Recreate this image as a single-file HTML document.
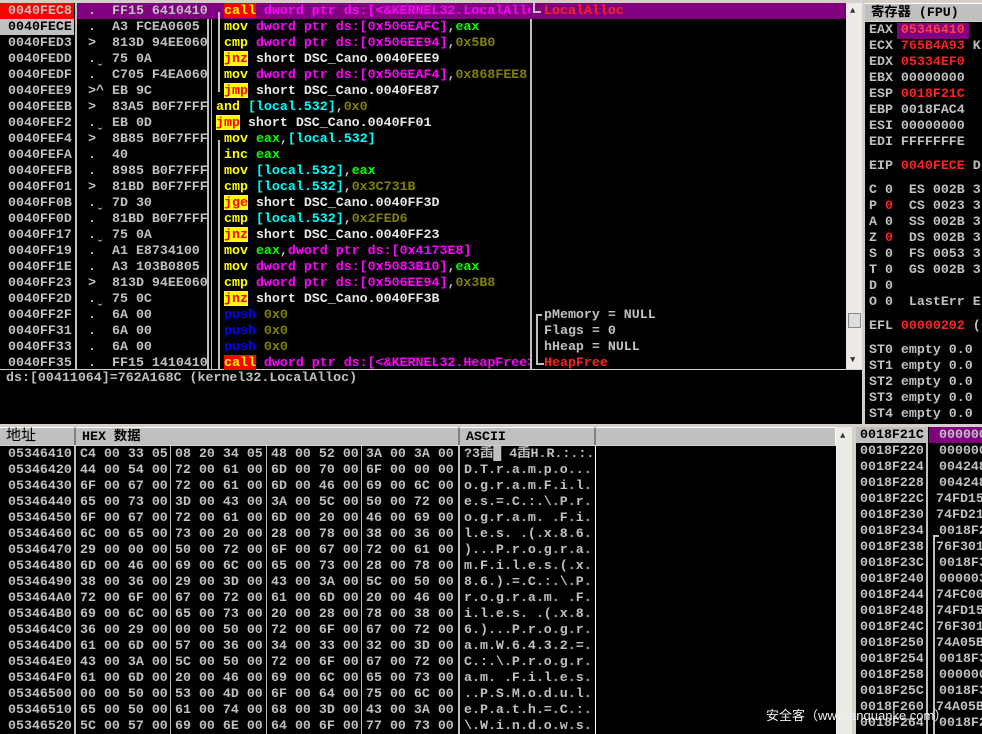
<!DOCTYPE html>
<html><head><meta charset="utf-8">
<style>
*{margin:0;padding:0;box-sizing:border-box}
body{width:982px;height:734px;overflow:hidden;background:#d4d0c8;position:relative;font-family:"Liberation Mono","Noto Sans CJK SC",monospace;font-size:13.3px;font-weight:bold;color:#c0c0c0}
.a{position:absolute;white-space:pre;line-height:16px;height:16px;overflow:hidden}
.blk{position:absolute;background:#000}
.vl{position:absolute;background:#c0c0c0;width:2px}
.y{color:#ffff00}.m{color:#ff00ff}.g{color:#00ff00}.c{color:#00ffff}.o{color:#808000}.b{color:#0000ff}.w{color:#e8e8e8}.r{color:#ff2020}
.cl{background:#ff0000;color:#ffff00}.jp{background:#ffff00;color:#ff0000}
.hd{position:absolute;background:#c0c0c0;color:#000;line-height:18px;height:18px;border-right:2px solid #808080;border-top:1px solid #fff;padding-left:6px;white-space:pre;font-weight:bold}
</style></head><body>
<!-- disasm pane -->
<div class="blk" style="left:0;top:3px;width:846px;height:366px"></div>
<div class="blk" style="left:0;top:3px;width:74px;height:366px"></div>
<div class="vl" style="left:75px;top:3px;height:366px"></div>
<div class="vl" style="left:207px;top:3px;height:366px"></div>
<div class="vl" style="left:211px;top:3px;height:366px;width:1px"></div>
<div class="vl" style="left:530px;top:3px;height:366px"></div>
<div style="position:absolute;left:77px;top:3px;width:769px;height:16px;background:#800080"></div>
<div style="position:absolute;left:0;top:3px;width:74px;height:16px;background:#ff0000"></div>
<div style="position:absolute;left:0;top:19px;width:74px;height:16px;background:#c0c0c0"></div>
<!-- scrollbar -->
<div style="position:absolute;left:846px;top:3px;width:16px;height:366px;background:#ecebe7"></div>
<div style="position:absolute;left:848px;top:313px;width:13px;height:15px;background:#ddd;border:1px solid #888"></div>
<div class="a" style="left:850px;top:3px;font-size:9px;color:#333">▲</div>
<div class="a" style="left:850px;top:352px;font-size:9px;color:#333">▼</div>
<div id="dis"></div>
<!-- info -->
<div class="blk" style="left:0;top:370px;width:862px;height:54px"></div>
<div class="a" style="left:6px;top:370px">ds:[00411064]=762A168C (kernel32.LocalAlloc)</div>
<!-- registers -->
<div class="blk" style="left:865px;top:22px;width:117px;height:402px"></div>
<div class="hd" style="left:865px;top:3px;width:117px;font-family:'Liberation Mono','Noto Sans CJK SC',monospace;border-right:none">寄存器 (FPU)</div>
<div style="position:absolute;left:897px;top:23px;width:72px;height:16px;background:#800080"></div>
<div id="reg"></div>
<!-- dump -->
<div class="blk" style="left:0;top:446px;width:836px;height:288px"></div>
<div class="hd" style="left:0;top:427px;width:76px;font-weight:normal;font-size:15px">地址</div>
<div class="hd" style="left:76px;top:427px;width:384px">HEX 数据</div>
<div class="hd" style="left:460px;top:427px;width:136px">ASCII</div>
<div class="hd" style="left:596px;top:427px;width:240px;border-right:1px solid #fff"></div>
<div class="vl" style="left:74px;top:446px;height:288px"></div>
<div class="vl" style="left:170px;top:446px;height:288px;width:1px"></div>
<div class="vl" style="left:266px;top:446px;height:288px;width:1px"></div>
<div class="vl" style="left:361px;top:446px;height:288px;width:1px"></div>
<div class="vl" style="left:458px;top:446px;height:288px"></div>
<div class="vl" style="left:595px;top:446px;height:288px;background:#fff;width:1px"></div>
<div style="position:absolute;left:836px;top:427px;width:16px;height:307px;background:#ecebe7"></div>
<div class="a" style="left:840px;top:428px;font-size:9px;color:#333">▲</div>
<div id="dump"></div>
<!-- stack -->
<div class="blk" style="left:856px;top:427px;width:126px;height:307px"></div>
<div style="position:absolute;left:856px;top:427px;width:70px;height:16px;background:#c0c0c0"></div>
<div class="vl" style="left:926px;top:427px;height:307px"></div>
<div style="position:absolute;left:929px;top:427px;width:53px;height:16px;background:#800080"></div>
<div style="position:absolute;left:933px;top:535px;width:2px;height:199px;background:#c0c0c0"></div>
<div style="position:absolute;left:933px;top:535px;width:6px;height:2px;background:#c0c0c0"></div>
<div id="stk"></div>
<div class="a" style="left:766px;top:707px;font-family:'Liberation Sans','Noto Sans CJK SC',sans-serif;font-weight:normal;font-size:13px;color:#f0f0f0;height:18px;line-height:18px">安全客（www.anquanke.com）</div>
<script>
var D=[
["0040FEC8",".","FF15 64104100",'<span class="cl">call</span> <span class="m">dword ptr ds:[&lt;&amp;KERNEL32.LocalAlloc&gt;]</span>',224,'<span class="r">LocalAlloc</span>'],
["0040FECE",".","A3 FCEA0605",'<span class="y">mov</span> <span class="m">dword ptr ds:[0x506EAFC]</span>,<span class="g">eax</span>',224],
["0040FED3",">","813D 94EE0605",'<span class="y">cmp</span> <span class="m">dword ptr ds:[0x506EE94]</span>,<span class="o">0x5B0</span>',224],
["0040FEDD",".\u02ec","75 0A",'<span class="jp">jnz</span> <span class="w">short DSC_Cano.0040FEE9</span>',224],
["0040FEDF",".","C705 F4EA0605",'<span class="y">mov</span> <span class="m">dword ptr ds:[0x506EAF4]</span>,<span class="o">0x868FEE8</span>',224],
["0040FEE9",">^","EB 9C",'<span class="jp">jmp</span> <span class="w">short DSC_Cano.0040FE87</span>',224],
["0040FEEB",">","83A5 B0F7FFFF",'<span class="y">and</span> <span class="c">[local.532]</span>,<span class="o">0x0</span>',216],
["0040FEF2",".\u02ec","EB 0D",'<span class="jp">jmp</span> <span class="w">short DSC_Cano.0040FF01</span>',216],
["0040FEF4",">","8B85 B0F7FFFF",'<span class="y">mov</span> <span class="g">eax</span>,<span class="c">[local.532]</span>',224],
["0040FEFA",".","40",'<span class="y">inc</span> <span class="g">eax</span>',224],
["0040FEFB",".","8985 B0F7FFFF",'<span class="y">mov</span> <span class="c">[local.532]</span>,<span class="g">eax</span>',224],
["0040FF01",">","81BD B0F7FFFF",'<span class="y">cmp</span> <span class="c">[local.532]</span>,<span class="o">0x3C731B</span>',224],
["0040FF0B",".\u02ec","7D 30",'<span class="jp">jge</span> <span class="w">short DSC_Cano.0040FF3D</span>',224],
["0040FF0D",".","81BD B0F7FFFF",'<span class="y">cmp</span> <span class="c">[local.532]</span>,<span class="o">0x2FED6</span>',224],
["0040FF17",".\u02ec","75 0A",'<span class="jp">jnz</span> <span class="w">short DSC_Cano.0040FF23</span>',224],
["0040FF19",".","A1 E8734100",'<span class="y">mov</span> <span class="g">eax</span>,<span class="m">dword ptr ds:[0x4173E8]</span>',224],
["0040FF1E",".","A3 103B0805",'<span class="y">mov</span> <span class="m">dword ptr ds:[0x5083B10]</span>,<span class="g">eax</span>',224],
["0040FF23",">","813D 94EE0605",'<span class="y">cmp</span> <span class="m">dword ptr ds:[0x506EE94]</span>,<span class="o">0x3B8</span>',224],
["0040FF2D",".\u02ec","75 0C",'<span class="jp">jnz</span> <span class="w">short DSC_Cano.0040FF3B</span>',224],
["0040FF2F",".","6A 00",'<span class="b">push</span> <span class="o">0x0</span>',224,'pMemory = NULL'],
["0040FF31",".","6A 00",'<span class="b">push</span> <span class="o">0x0</span>',224,'Flags = 0'],
["0040FF33",".","6A 00",'<span class="b">push</span> <span class="o">0x0</span>',224,'hHeap = NULL'],
["0040FF35",".","FF15 14104100",'<span class="cl">call</span> <span class="m">dword ptr ds:[&lt;&amp;KERNEL32.HeapFree&gt;]</span>',224,'<span class="r">HeapFree</span>']];
var h='';
D.forEach(function(r,i){var y=3+i*16;var ac=i==1?'color:#000':'';
h+='<div class="a" style="left:8px;top:'+y+'px;'+ac+'">'+r[0]+'</div>';
h+='<div class="a" style="left:88px;top:'+y+'px">'+r[1]+'</div>';
h+='<div class="a" style="left:112px;top:'+y+'px;width:95px">'+r[2]+'</div>';
h+='<div class="a" style="left:'+r[4]+'px;top:'+y+'px;width:'+(530-r[4])+'px">'+r[3]+'</div>';
if(r[5])h+='<div class="a" style="left:544px;top:'+y+'px;width:300px">'+r[5]+'</div>';});
// bracket lines
h+='<div style="position:absolute;left:218px;top:12px;width:2px;height:80px;background:#c0c0c0"></div>';
h+='<div style="position:absolute;left:218px;top:140px;width:2px;height:230px;background:#c0c0c0"></div>';
h+='<div style="position:absolute;left:533px;top:3px;width:2px;height:9px;background:#c0c0c0"></div><div style="position:absolute;left:533px;top:11px;width:8px;height:2px;background:#c0c0c0"></div>';
h+='<div style="position:absolute;left:536px;top:314px;width:2px;height:50px;background:#c0c0c0"></div><div style="position:absolute;left:536px;top:314px;width:6px;height:2px;background:#c0c0c0"></div><div style="position:absolute;left:536px;top:363px;width:8px;height:2px;background:#c0c0c0"></div>';
document.getElementById('dis').innerHTML=h;
var R=[[30,'EAX <span style="color:#ff4040">05346410</span>'],[46,'ECX <span class="r">765B4A93</span> K'],[62,'EDX <span class="r">05334EF0</span>'],[78,'EBX 00000000'],[94,'ESP <span class="r">0018F21C</span>'],[110,'EBP 0018FAC4'],[126,'ESI 00000000'],[142,'EDI FFFFFFFE'],[166,'EIP <span class="r">0040FECE</span> D'],
[190,'C 0  ES 002B 3'],[206,'P <span class="r">0</span>  CS 0023 3'],[222,'A 0  SS 002B 3'],[238,'Z <span class="r">0</span>  DS 002B 3'],[254,'S 0  FS 0053 3'],[270,'T 0  GS 002B 3'],[286,'D 0'],[302,'O 0  LastErr E'],[326,'EFL <span class="r">00000202</span> ('],[350,'ST0 empty 0.0'],[366,'ST1 empty 0.0'],[382,'ST2 empty 0.0'],[398,'ST3 empty 0.0'],[414,'ST4 empty 0.0']];
h='';R.forEach(function(r){h+='<div class="a" style="left:869px;top:'+(r[0]-8)+'px;width:113px">'+r[1]+'</div>';});
document.getElementById('reg').innerHTML=h;
var M=["05346410 C4 00 33 05 08 20 34 05 48 00 52 00 3A 00 3A 00 ?3\u81ff\u2588 4\u81ffH.R.:.:.",
"05346420 44 00 54 00 72 00 61 00 6D 00 70 00 6F 00 00 00 D.T.r.a.m.p.o...",
"05346430 6F 00 67 00 72 00 61 00 6D 00 46 00 69 00 6C 00 o.g.r.a.m.F.i.l.",
"05346440 65 00 73 00 3D 00 43 00 3A 00 5C 00 50 00 72 00 e.s.=.C.:.\\.P.r.",
"05346450 6F 00 67 00 72 00 61 00 6D 00 20 00 46 00 69 00 o.g.r.a.m. .F.i.",
"05346460 6C 00 65 00 73 00 20 00 28 00 78 00 38 00 36 00 l.e.s. .(.x.8.6.",
"05346470 29 00 00 00 50 00 72 00 6F 00 67 00 72 00 61 00 )...P.r.o.g.r.a.",
"05346480 6D 00 46 00 69 00 6C 00 65 00 73 00 28 00 78 00 m.F.i.l.e.s.(.x.",
"05346490 38 00 36 00 29 00 3D 00 43 00 3A 00 5C 00 50 00 8.6.).=.C.:.\\.P.",
"053464A0 72 00 6F 00 67 00 72 00 61 00 6D 00 20 00 46 00 r.o.g.r.a.m. .F.",
"053464B0 69 00 6C 00 65 00 73 00 20 00 28 00 78 00 38 00 i.l.e.s. .(.x.8.",
"053464C0 36 00 29 00 00 00 50 00 72 00 6F 00 67 00 72 00 6.)...P.r.o.g.r.",
"053464D0 61 00 6D 00 57 00 36 00 34 00 33 00 32 00 3D 00 a.m.W.6.4.3.2.=.",
"053464E0 43 00 3A 00 5C 00 50 00 72 00 6F 00 67 00 72 00 C.:.\\.P.r.o.g.r.",
"053464F0 61 00 6D 00 20 00 46 00 69 00 6C 00 65 00 73 00 a.m. .F.i.l.e.s.",
"05346500 00 00 50 00 53 00 4D 00 6F 00 64 00 75 00 6C 00 ..P.S.M.o.d.u.l.",
"05346510 65 00 50 00 61 00 74 00 68 00 3D 00 43 00 3A 00 e.P.a.t.h.=.C.:.",
"05346520 5C 00 57 00 69 00 6E 00 64 00 6F 00 77 00 73 00 \\.W.i.n.d.o.w.s."];
h='';M.forEach(function(l,i){var y=446+i*16;var p=l.split(' ');var asc=l.substr(57);
h+='<div class="a" style="left:8px;top:'+y+'px">'+p[0]+'</div>';
for(var g=0;g<4;g++){var x=[80,175,271,366][g];h+='<div class="a" style="left:'+x+'px;top:'+y+'px">'+p.slice(1+g*4,5+g*4).join(' ')+'</div>';}
h+='<div class="a" style="left:464px;top:'+y+'px">'+asc.replace(/&/g,'&amp;').replace(/</g,'&lt;')+'</div>';});
document.getElementById('dump').innerHTML=h;
var S=[["0018F21C","00000000"],["0018F220","00000000"],["0018F224","00424800"],["0018F228","00424800"],["0018F22C","74FD1500"],["0018F230","74FD2100"],["0018F234","0018F200"],["0018F238","76F30100"],["0018F23C","0018F300"],["0018F240","00000300"],["0018F244","74FC0000"],["0018F248","74FD1500"],["0018F24C","76F30100"],["0018F250","74A05B00"],["0018F254","0018F300"],["0018F258","00000000"],["0018F25C","0018F300"],["0018F260","74A05B00"],["0018F264","0018F200"]];
h='';S.forEach(function(s,i){var y=427+i*16;var c=i==0?'color:#000':'';var off=(i>=4&&i<=5||i>=7&&i<=8&&i!=8||i==10||i==11||i==12||i==13||i==17)?936:939;
h+='<div class="a" style="left:860px;top:'+y+'px;'+c+'">'+s[0]+'</div>';
h+='<div class="a" style="left:'+off+'px;top:'+y+'px;width:'+(982-off)+'px">'+s[1]+'</div>';});
document.getElementById('stk').innerHTML=h;
</script>
</body></html>
